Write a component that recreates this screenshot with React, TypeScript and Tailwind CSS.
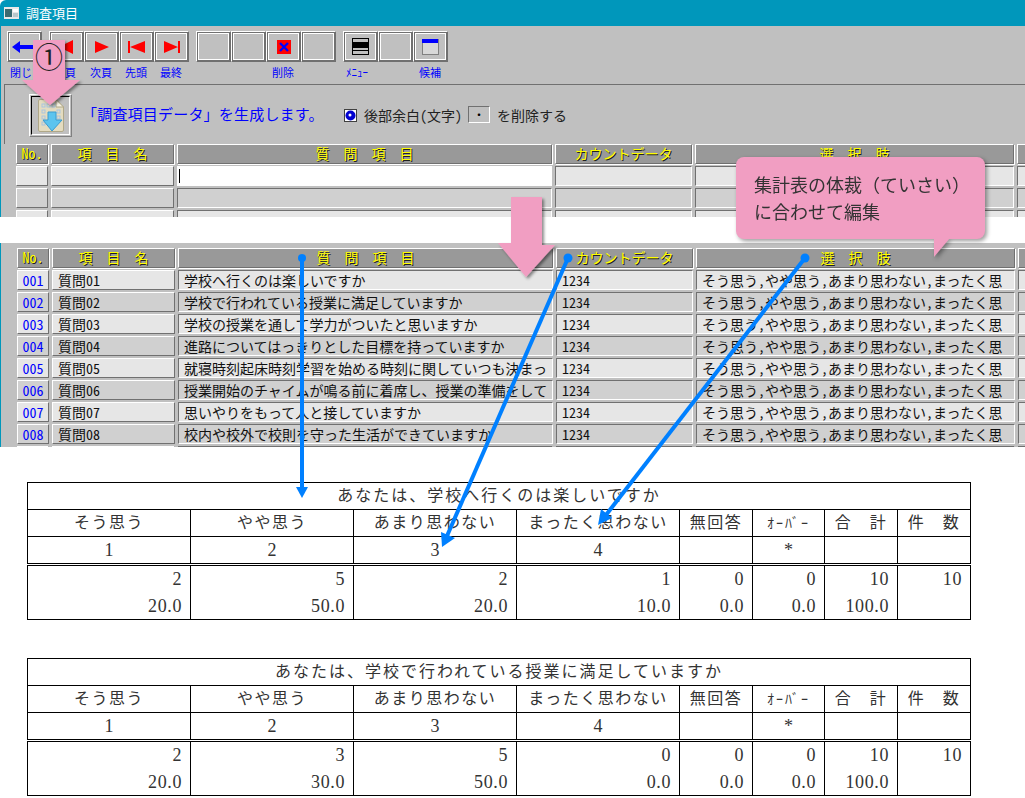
import React from 'react'

const gridFont = "[font-feature-settings:'hwid']"

function ToolButton({ children, className = '' }: { children?: React.ReactNode; className?: string }) {
  return (
    <div className={`w-[35px] h-[31px] border border-t-white border-l-white border-r-[#707070] border-b-[#707070] ${className}`}>
      <div className="w-full h-full border border-[#707070]">
        <div className="w-full h-full border border-white flex items-center justify-center">{children}</div>
      </div>
    </div>
  )
}

function ToolLabel({ text, className }: { text: string; className: string }) {
  return <span className={`absolute top-0 text-[11px] leading-[14px] text-[#0000ff] whitespace-nowrap ${className}`}>{text}</span>
}

function Toolbar() {
  return (
    <div className="pl-[6px] pt-[5px]">
      <div className="flex">
        <ToolButton>
          <svg width="26" height="14" viewBox="0 0 26 14"><path d="M0 7 L8 1 V5 H26 V9 H8 V13 Z" fill="#0000ff" /></svg>
        </ToolButton>
        <ToolButton className="ml-[7px]">
          <svg width="16" height="14" viewBox="0 0 16 14"><path d="M0 7 L14 0 V14 Z" fill="#ff0000" /></svg>
        </ToolButton>
        <ToolButton>
          <svg width="14" height="12" viewBox="0 0 14 12"><path d="M0 0 L14 6 L0 12 Z" fill="#ff0000" /></svg>
        </ToolButton>
        <ToolButton>
          <svg width="17" height="12" viewBox="0 0 17 12"><path d="M0 0 H2 V12 H0 Z M2 6 L17 0 V12 Z" fill="#ff0000" /></svg>
        </ToolButton>
        <ToolButton>
          <svg width="16" height="12" viewBox="0 0 16 12"><path d="M0 0 L14 6 L0 12 Z M14 0 H16 V12 H14 Z" fill="#ff0000" /></svg>
        </ToolButton>
        <ToolButton className="ml-[7px]" />
        <ToolButton />
        <ToolButton>
          <svg width="14" height="14" viewBox="0 0 14 14">
            <rect width="14" height="14" fill="#ff0000" />
            <path d="M3 3 L11 11 M11 3 L3 11" stroke="#0000ff" strokeWidth="2.4" />
          </svg>
        </ToolButton>
        <ToolButton />
        <ToolButton className="ml-[7px]">
          <svg width="17" height="17" viewBox="0 0 17 17">
            <rect x="0.5" y="0.5" width="16" height="16" fill="#c0c0c0" stroke="#000" />
            <rect x="0" y="4" width="17" height="6" fill="#000" />
            <path d="M0 12.5 H17" stroke="#000" />
          </svg>
        </ToolButton>
        <ToolButton />
        <ToolButton>
          <svg width="17" height="16" viewBox="0 0 17 16">
            <rect x="0.5" y="0.5" width="16" height="15" fill="#d8d8d8" stroke="#808080" />
            <rect x="0" y="0" width="16" height="4" fill="#0000ff" />
          </svg>
        </ToolButton>
      </div>
      <div className="relative h-[14px] mt-[3px]">
        <ToolLabel text="閉じる" className="left-[3px]" />
        <ToolLabel text="前頁" className="left-[47px]" />
        <ToolLabel text="次頁" className="left-[83px]" />
        <ToolLabel text="先頭" className="left-[118px]" />
        <ToolLabel text="最終" className="left-[153px]" />
        <ToolLabel text="削除" className="left-[265px]" />
        <ToolLabel text="ﾒﾆｭｰ" className="left-[339px]" />
        <ToolLabel text="候補" className="left-[412px]" />
      </div>
    </div>
  )
}

function GenerateIcon() {
  return (
    <svg width="26" height="33" viewBox="0 0 26 33">
      <path d="M2 0.5 H18 L25.5 8 V31 Q25.5 32.5 24 32.5 H2 Q0.5 32.5 0.5 31 V2 Q0.5 0.5 2 0.5 Z" fill="#e4dcc0" stroke="#b0a888" />
      <path d="M18 0.5 V8 H25.5 Z" fill="#f6f2e2" stroke="#b0a888" />
      <g fill="none" stroke="#a8c4e0">
        <rect x="4" y="5" width="3" height="3" />
        <rect x="9" y="5" width="3" height="3" />
        <rect x="14" y="5" width="3" height="3" />
        <rect x="4" y="11" width="3" height="3" />
        <rect x="4" y="17" width="3" height="3" />
        <rect x="4" y="23" width="3" height="3" />
        <rect x="19" y="11" width="3" height="3" />
        <rect x="19" y="17" width="3" height="3" />
      </g>
      <path d="M10 13 H18 V21 H24 L14 32 L5 21 H10 Z" fill="#5cc4ee" stroke="#3a9cd0" />
    </svg>
  )
}

function Panel() {
  return (
    <div className="ml-[3px] mt-[5px] h-[60px] border-t border-l border-[#707070] pl-[24px] pt-[9px] flex items-start">
      <div className="w-[43px] h-[43px] shrink-0 border border-white border-r-[#808080] border-b-[#808080] p-px">
        <div className="w-full h-full border border-black border-r-white border-b-white flex items-center justify-center">
          <GenerateIcon />
        </div>
      </div>
      <div className="ml-[10px] pb-[2px] h-[43px] w-[262px] shrink-0 flex items-center text-[15px] tracking-[0.2px] text-[#0000ff] whitespace-nowrap">「調査項目データ」を生成します。</div>
      <div className={`h-[43px] flex items-center text-[14px] text-[#222222] whitespace-nowrap ${gridFont}`}>
        <svg width="13" height="13" viewBox="0 0 13 13" className="mr-[7px]">
          <rect x="0.5" y="0.5" width="12" height="12" fill="#fff" stroke="#404040" />
          <circle cx="6.5" cy="6.5" r="5" fill="#0000d0" />
          <circle cx="6" cy="6" r="1.5" fill="#fff" />
        </svg>
        <span>後部余白(文字)</span>
        <div className="ml-[6px] mt-[-2px] w-[22px] h-[17px] border border-t-[#707070] border-l-[#707070] border-r-white border-b-white flex items-center justify-center text-[12px] text-black">・</div>
        <span className="ml-[7px]">を削除する</span>
      </div>
    </div>
  )
}

const head = 'h-[20px] shrink-0 pb-[2px] bg-[#999999] border border-t-white border-l-white border-r-[#707070] border-b-[#707070] shadow-[1px_1px_0_#ffffff] flex items-center justify-center text-[14px] text-[#ffff00] [text-shadow:1px_1px_0_#202020] whitespace-nowrap overflow-hidden'

function HeaderRow() {
  return (
    <div className="flex gap-[3px]">
      <div className={`${head} w-[32px] ${gridFont}`}>No.</div>
      <div className={`${head} w-[123px]`}>項　目　名</div>
      <div className={`${head} w-[375px]`}>質　問　項　目</div>
      <div className={`${head} w-[137px]`}>カウントデータ</div>
      <div className={`${head} w-[319px]`}>選　択　肢</div>
      <div className={`${head} w-[60px]`} />
    </div>
  )
}

type RowProps = { dark: boolean; no?: string; name?: string; question?: string; count?: string; choices?: string; input?: boolean }

function DataRow({ dark, no, name, question, count, choices, input }: RowProps) {
  const bg = dark ? 'bg-[#d0d0d0]' : 'bg-[#e6e6e6]'
  const raised = `h-[20px] ${bg} border border-t-white border-l-white border-r-[#707070] border-b-[#707070] shrink-0 flex items-center overflow-hidden whitespace-nowrap`
  const sunken = `h-[20px] ${bg} border border-t-[#707070] border-l-[#707070] border-r-white border-b-white shrink-0 flex items-center pl-[5px] overflow-hidden whitespace-nowrap`
  return (
    <div className={`flex gap-[3px] text-[14px] leading-none text-[#111111] ${gridFont}`}>
      <div className={`${raised} w-[32px] justify-center text-[#0000ff]`}>{no}</div>
      <div className={`${raised} w-[123px] pl-[5px]`}>{name}</div>
      {input ? (
        <div className="h-[20px] w-[375px] bg-white shrink-0 flex items-center pl-[2px]">
          <div className="w-px h-[14px] bg-black" />
        </div>
      ) : (
        <div className={`${sunken} w-[375px]`}>{question}</div>
      )}
      <div className={`${sunken} w-[137px]`}>{count}</div>
      <div className={`${sunken} w-[319px]`}>{choices}</div>
      <div className={`${sunken} w-[60px]`} />
    </div>
  )
}

const CHOICES = 'そう思う,やや思う,あまり思わない,まったく思'

const questions = [
  '学校へ行くのは楽しいですか',
  '学校で行われている授業に満足していますか',
  '学校の授業を通して学力がついたと思いますか',
  '進路についてはっきりとした目標を持っていますか',
  '就寝時刻起床時刻学習を始める時刻に関していつも決まっ',
  '授業開始のチャイムが鳴る前に着席し、授業の準備をして',
  '思いやりをもって人と接していますか',
  '校内や校外で校則を守った生活ができていますか',
]

const labels = ['そう思う', 'やや思う', 'あまり思わない', 'まったく思わない', '無回答', 'ｵｰﾊﾞｰ', '合　計', '件　数']
const codes = ['1', '2', '3', '4', '', '*', '', '']
const colClass = 'grid grid-cols-[163px_163px_163px_163px_73px_72px_73px_73px]'

function SurveyTable({ title, counts, rates }: { title: string; counts: string[]; rates: string[] }) {
  const cell = 'h-[27px] border-r border-b border-black flex items-center justify-center whitespace-nowrap'
  return (
    <div className="ml-[27px] w-[944px] text-[#333333] font-['Liberation_Serif','Noto_Sans_CJK_JP',serif] text-[16px]">
      <div className={`${colClass} border-t border-l border-black`}>
        <div className={`${cell} col-span-8 tracking-[2px]`}>{title}</div>
        {labels.map((label, i) => (
          <div key={i} className={`${cell} ${i === 5 ? 'text-[14px] tracking-[2px]' : 'tracking-[1.5px]'}`}>{label}</div>
        ))}
        {codes.map((code, i) => (
          <div key={i} className={`${cell} text-[18px]`}>{code}</div>
        ))}
      </div>
      <div className={`${colClass} mt-px border-t border-l border-black text-[18px] tracking-[0.6px]`}>
        {counts.map((count, i) => (
          <div key={i} className="h-[54px] border-r border-b border-black flex flex-col items-end pr-[8px]">
            <span className="h-[27px] leading-[27px]">{count}</span>
            <span className="h-[27px] leading-[27px]">{rates[i]}</span>
          </div>
        ))}
      </div>
    </div>
  )
}

function Overlays() {
  return (
    <>
      <svg width="1025" height="798" viewBox="0 0 1025 798" className="absolute left-0 top-0 pointer-events-none">
        <defs>
          <filter id="soft" x="-20%" y="-20%" width="150%" height="150%">
            <feDropShadow dx="2" dy="2" stdDeviation="1.5" floodColor="#000" floodOpacity="0.45" />
          </filter>
        </defs>
        <path d="M33 40 H65 V80 H80 L50 105 L22 80 H33 Z" fill="#f19ec2" filter="url(#soft)" />
        <path d="M511 197 H542 V245 H555 L526 277 L498 243 H511 Z" fill="#f19ec2" filter="url(#soft)" />
        <g stroke="#0080ff" strokeWidth="4" fill="#0080ff">
          <circle cx="302" cy="258" r="4" stroke="none" />
          <path d="M302 258 V488" />
          <path d="M296 487 H308 L302 498 Z" stroke="none" />
          <circle cx="568" cy="258" r="4.5" stroke="none" />
          <path d="M568 258 L447 536" />
          <path d="M441 532 L455 538 L442 547 Z" stroke="none" />
          <circle cx="805" cy="258" r="4.5" stroke="none" />
          <path d="M805 258 L606 515" />
          <path d="M601 509 L612 518 L598 525 Z" stroke="none" />
        </g>
      </svg>
      <div className="absolute left-[34px] top-[41px] w-[30px] h-[30px] flex items-center justify-center text-[28px] leading-none text-[#222222]">①</div>
      <div className="absolute left-[736px] top-[157px] w-[249px] h-[82px] [filter:drop-shadow(2px_2px_2px_rgba(0,0,0,0.4))]">
        <div className="w-full h-full rounded-[8px] bg-[#f19ec2] pl-[18px] pt-[14px] text-[18px] leading-[27px] text-[#333333] whitespace-nowrap">
          <div>集計表の体裁（ていさい）</div>
          <div>に合わせて編集</div>
        </div>
        <svg width="16" height="19" viewBox="0 0 16 19" className="absolute left-[198px] top-[81px]">
          <path d="M0 0 H16 L0 19 Z" fill="#f19ec2" />
        </svg>
      </div>
    </>
  )
}

export default function App() {
  return (
    <div className="relative w-[1025px] h-[798px] overflow-hidden bg-white font-['Noto_Sans_CJK_JP',sans-serif]">
      {/* Title bar */}
      <div className="h-[26px] bg-[#0097bb] rounded-tl-[6px] flex items-center pl-[4px]">
        <svg width="15" height="12" viewBox="0 0 15 12" className="mr-[7px]">
          <rect width="15" height="12" fill="#e8e8e8" />
          <rect x="1" y="2" width="7" height="8" fill="#3a6a70" />
          <rect x="9" y="2" width="5" height="3" fill="#fff" />
          <rect x="9" y="6" width="5" height="4" fill="#b8c8cc" />
        </svg>
        <span className="text-[13px] text-white">調査項目</span>
      </div>

      {/* Upper window */}
      <div className="h-[191px] bg-[#c0c0c0] border-l border-[#0097bb] overflow-hidden">
        <Toolbar />
        <Panel />
        <div className="pl-[15px] flex flex-col gap-[2px]">
          <HeaderRow />
          <DataRow dark={false} input />
          <DataRow dark />
          <DataRow dark={false} />
        </div>
      </div>

      <div className="h-[26px] bg-white" />

      {/* Lower window */}
      <div className="h-[204px] bg-[#c0c0c0] border-l border-[#0097bb] overflow-hidden pl-[16px] pt-[5px] flex flex-col gap-[2px]">
        <HeaderRow />
        {questions.map((question, i) => (
          <DataRow
            key={i}
            dark={i % 2 === 1}
            no={`00${i + 1}`}
            name={`質問0${i + 1}`}
            question={question}
            count="1234"
            choices={CHOICES}
          />
        ))}
        <DataRow dark={false} />
      </div>

      {/* Printed tables */}
      <div className="pt-[35px]">
        <SurveyTable
          title="あなたは、学校へ行くのは楽しいですか"
          counts={['2', '5', '2', '1', '0', '0', '10', '10']}
          rates={['20.0', '50.0', '20.0', '10.0', '0.0', '0.0', '100.0', '']}
        />
        <div className="h-[38px]" />
        <SurveyTable
          title="あなたは、学校で行われている授業に満足していますか"
          counts={['2', '3', '5', '0', '0', '0', '10', '10']}
          rates={['20.0', '30.0', '50.0', '0.0', '0.0', '0.0', '100.0', '']}
        />
      </div>

      <Overlays />
    </div>
  )
}
